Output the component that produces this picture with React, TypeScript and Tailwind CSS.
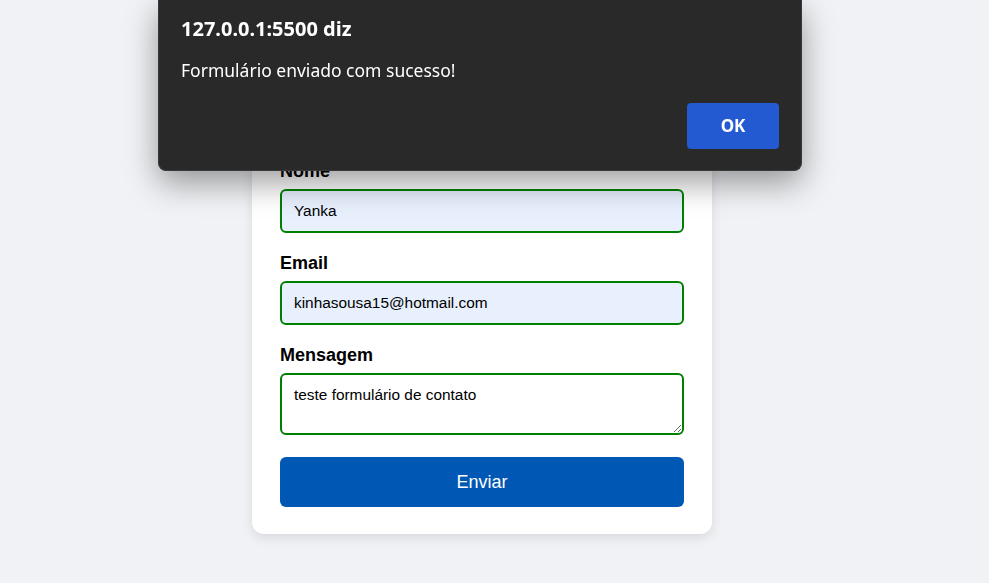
import React from "react";

const App: React.FC = () => (
    <div className="min-h-[583px] bg-[#f0f2f5] font-['Liberation_Sans',Arial,sans-serif]">
        <div className="w-[964px] flex justify-center pt-[133px] pb-[49px]">
            <form className="w-[460px] bg-white rounded-xl shadow-[0_4px_12px_rgba(0,0,0,0.1)] px-7 pt-7 pb-[27px] flex flex-col">
                <label className="text-lg font-bold text-black leading-5 mb-2">Nome</label>
                <input
                    className="h-11 border-2 border-[#008000] rounded-md bg-[#e8f0fe] px-3 text-[15.4px] text-black outline-none mb-5"
                    defaultValue="Yanka"/>
                <label className="text-lg font-bold text-black leading-5 mb-2">Email</label>
                <input
                    className="h-11 border-2 border-[#008000] rounded-md bg-[#e8f0fe] px-3 text-[15.4px] text-black outline-none mb-5"
                    defaultValue="kinhasousa15@hotmail.com"/>
                <label className="text-lg font-bold text-black leading-5 mb-2">Mensagem</label>
                <textarea
                    className="h-[62px] border-2 border-[#008000] rounded-md bg-white px-3 pt-[11px] text-[15.4px] leading-[18px] text-black outline-none mb-[22px] resize-y block"
                    defaultValue="teste formulário de contato"/>
                <button type="button"
                        className="h-[50px] rounded-md bg-[#0057b4] text-white text-lg">Enviar
                </button>
            </form>
        </div>
        <div
            className="fixed top-0 left-[158px] w-[644px] h-[171px] bg-[#292929] rounded-b-lg border-x border-b border-[#3a3a3a] shadow-[0_12px_32px_rgba(0,0,0,0.38)] px-[22px] pt-[16px] font-['Noto_Sans',sans-serif]">
            <h2 className="text-white text-[20px] font-bold leading-[26px]">127.0.0.1:5500 diz</h2>
            <p className="text-white text-[17.5px] leading-6 mt-[16px]">Formulário enviado com sucesso!</p>
            <div className="flex justify-end mt-[21px]">
                <button type="button"
                        className="w-[92px] h-[46px] rounded bg-[#2359d1] text-white text-[17px] font-bold">OK
                </button>
            </div>
        </div>
    </div>
)

export default App;
